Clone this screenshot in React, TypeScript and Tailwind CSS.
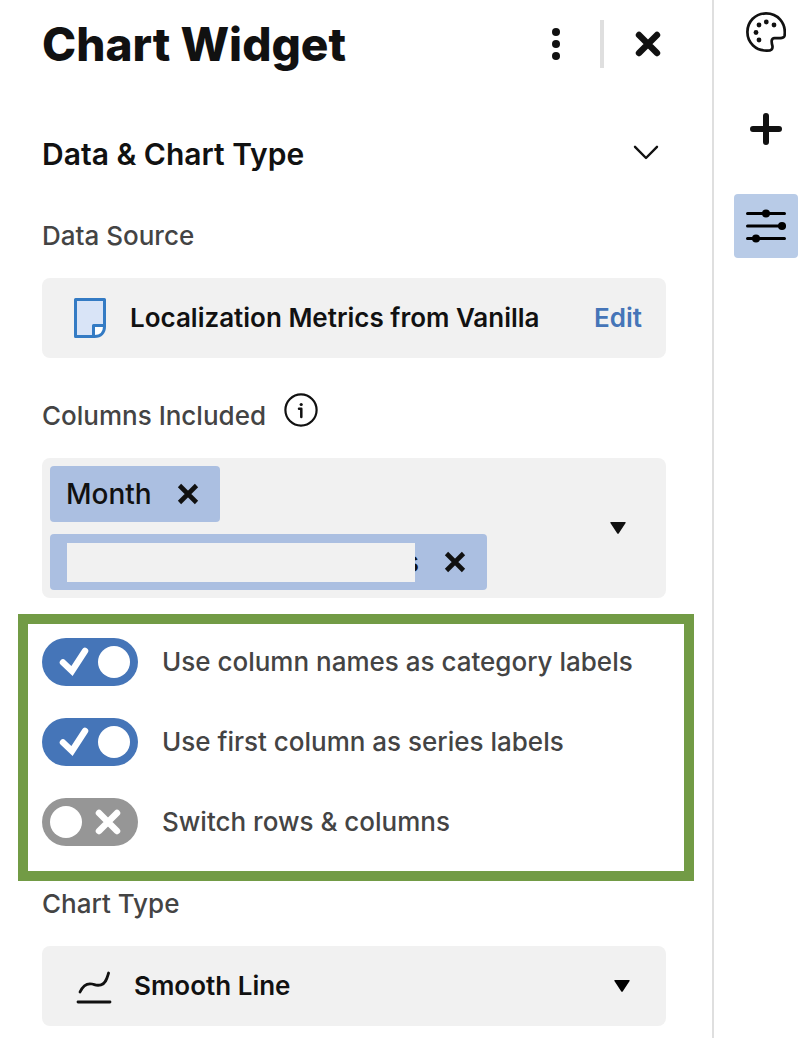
import { useState } from "react";
import type { ReactNode } from "react";

function CrossIcon({ className }: { className: string }) {
  return (
    <svg viewBox="0 0 24 24" className={className} fill="none" stroke="currentColor" strokeWidth="4.6" aria-hidden="true">
      <path d="M3.500 3.500 20.500 20.500M20.500 3.500 3.500 20.500" />
    </svg>
  );
}

function CloseIcon() {
  return (
    <svg viewBox="0 0 26 26" className="size-[26px]" fill="none" stroke="currentColor" strokeWidth="6.4" strokeLinecap="round" aria-hidden="true">
      <path d="M4 4 22 22M22 4 4 22" />
    </svg>
  );
}

function MoreIcon() {
  return (
    <svg viewBox="0 0 8 32" className="h-8 w-2" fill="currentColor" aria-hidden="true">
      <circle cx="4" cy="4" r="4" />
      <circle cx="4" cy="16" r="4" />
      <circle cx="4" cy="28" r="4" />
    </svg>
  );
}

function ChevronIcon() {
  return (
    <svg viewBox="0 0 26 18" className="h-[18px] w-[26px]" fill="none" stroke="currentColor" strokeWidth="2.400" strokeLinecap="round" strokeLinejoin="round" aria-hidden="true">
      <path d="M2 1.800 13 13 24 1.800" />
    </svg>
  );
}

function SheetIcon() {
  return (
    <svg viewBox="0 0 32 40" className="h-10 w-8 shrink-0" aria-hidden="true">
      <path d="M1.500 1.500h29V29c0 6-4 9.500-9.500 9.500H1.500z" fill="#d9e4f7" />
      <path d="M19.500 27.500h11V29c0 6-4 9.500-9.500 9.500h-1.500z" fill="#fff" />
      <path d="M1.500 1.500h29V28.500C30.500 34.500 27 38.500 20.500 38.500H1.500zM19.500 38.500V27.500H30.500" fill="none" stroke="#347bc4" strokeWidth="3" strokeLinejoin="round" />
    </svg>
  );
}

function InfoIcon() {
  return (
    <svg viewBox="0 0 34 34" className="size-[34px]" fill="none" stroke="currentColor" strokeWidth="2.200" aria-hidden="true">
      <circle cx="17" cy="17" r="15.600" />
      <path d="M15 15.800h2.300V24" strokeWidth="2.500" strokeLinecap="round" strokeLinejoin="round" />
      <circle cx="17.200" cy="11.500" r="1.600" fill="currentColor" stroke="none" />
    </svg>
  );
}

function CaretIcon({ className }: { className: string }) {
  return (
    <svg viewBox="0 0 16 12" className={className} fill="currentColor" aria-hidden="true">
      <path d="M1 0h14a.7.7 0 0 1 .6 1L8.700 11.400a.8.8 0 0 1-1.400 0L.4 1A.7.7 0 0 1 1 0z" />
    </svg>
  );
}

function SmoothLineIcon() {
  return (
    <svg viewBox="0 0 36 36" className="h-9 w-9" fill="none" stroke="currentColor" strokeWidth="2.800" strokeLinecap="round" aria-hidden="true">
      <path d="M4 24C7 17.500 11 15 16 16C20 17 21 18 25 16.800C30 15.500 31 10 32.600 5" />
      <path d="M2 34H34" />
    </svg>
  );
}

function PaletteIcon() {
  return (
    <svg viewBox="0 0 40 40" className="size-10" aria-hidden="true">
      <path
        d="M38.600 23.500C40.200 10.500 31.500 1.400 20 1.400C9.300 1.400 1.400 9.600 1.400 20C1.400 30.800 10 38.800 21 38.600C25.500 38.600 27 37 26.400 33.800C25.200 29.500 25.200 26.200 28.500 26.100C33 26.100 38 27 38.600 23.500Z"
        fill="none"
        stroke="currentColor"
        strokeWidth="2.700"
      />
      <g fill="currentColor">
        <circle cx="13" cy="13" r="2.400" />
        <circle cx="20.300" cy="10" r="2.400" />
        <circle cx="28" cy="13" r="2.400" />
        <circle cx="10" cy="20.500" r="2.400" />
        <circle cx="13" cy="28" r="2.400" />
      </g>
    </svg>
  );
}

function PlusIcon() {
  return (
    <svg viewBox="0 0 32 32" className="size-8" fill="none" stroke="currentColor" strokeWidth="6" strokeLinecap="round" aria-hidden="true">
      <path d="M16 3V29M3 16H29" />
    </svg>
  );
}

function SlidersIcon() {
  return (
    <svg viewBox="0 0 40 34" className="h-[34px] w-10" fill="#000" stroke="#000" strokeWidth="3" strokeLinecap="round" aria-hidden="true">
      <path d="M1.500 4.500h37M1.500 17h37M1.500 29.500h37" />
      <g stroke="none">
        <circle cx="20" cy="4.500" r="4" />
        <circle cx="36" cy="17" r="4" />
        <circle cx="10" cy="29.500" r="4" />
      </g>
    </svg>
  );
}

function Toggle({ label, initial }: { label: string; initial: boolean }) {
  const [on, setOn] = useState(initial);
  return (
    <label className="flex items-center gap-6 text-[26px] leading-8 font-medium text-[#444]">
      <span className="grid shrink-0">
        <input
          type="checkbox"
          role="switch"
          checked={on}
          onChange={(e) => setOn(e.target.checked)}
          className="col-start-1 row-start-1 h-12 w-24 appearance-none rounded-full bg-[#969696] checked:bg-[#4575b8]"
        />
        <svg viewBox="0 0 96 48" className="pointer-events-none col-start-1 row-start-1 h-12 w-24" fill="none" stroke="#fff" strokeWidth="6.500" strokeLinecap="round" aria-hidden="true">
          <circle cx={on ? 72 : 24} cy="24" r="16" fill="#fff" stroke="none" />
          {on ? (
            <path d="M21 24.500 30 33 43 13" strokeLinejoin="miter" />
          ) : (
            <path d="M57 15 75 33M75 15 57 33" />
          )}
        </svg>
      </span>
      {label}
    </label>
  );
}

function RailButton({ label, active, children }: { label: string; active?: boolean; children: ReactNode }) {
  return (
    <button
      type="button"
      aria-label={label}
      className={active ? "grid size-16 place-items-center rounded bg-[#b8cbe7]" : "grid size-16 place-items-center rounded"}
    >
      {children}
    </button>
  );
}

export default function App() {
  return (
    <div className="flex min-h-screen bg-white font-['Inter',sans-serif] text-[#111]">
      <main className="min-w-0 flex-1 border-r-2 border-[#dfdfdf] pr-[46px] pb-3 pl-[42px]">
        <header className="flex h-[88px] items-center">
          <h1 className="flex-1 text-[46px] leading-[56px] font-extrabold whitespace-nowrap">Chart Widget</h1>
          <button type="button" aria-label="More options" className="grid h-12 w-10 place-items-center">
            <MoreIcon />
          </button>
          <div className="mr-[31px] ml-6 h-12 w-1 bg-[#dfdfdf]" />
          <button type="button" aria-label="Close" className="mr-[5px]">
            <CloseIcon />
          </button>
        </header>

        <h2 className="mt-12 text-[30px] leading-9 font-semibold">
          <button type="button" aria-expanded="true" className="flex w-full items-center justify-between pr-[7px] text-left">
            Data &amp; Chart Type
            <ChevronIcon />
          </button>
        </h2>

        <h3 className="mt-12 text-[26px] leading-8 font-medium text-[#444]">Data Source</h3>
        <div className="mt-[26px] flex h-20 items-center rounded-lg bg-[#f1f1f1] pr-6 pl-8">
          <SheetIcon />
          <span className="ml-6 flex-1 text-[26px] leading-8 font-semibold whitespace-nowrap">Localization Metrics from Vanilla</span>
          <a href="#edit" className="text-[26px] leading-8 font-semibold text-[#4575b8]">Edit</a>
        </div>

        <div className="mt-[34px] flex h-10 items-start gap-[18px]">
          <h3 className="pt-2 text-[26px] leading-8 font-medium text-[#444]">Columns Included</h3>
          <button type="button" aria-label="About included columns" className="pt-px">
            <InfoIcon />
          </button>
        </div>
        <div className="mt-[26px] flex items-center justify-between rounded-lg bg-[#f1f1f1] py-2 pr-10 pl-2">
          <div className="flex flex-col items-start gap-3 text-[28px] leading-8 font-medium">
            <div className="flex h-14 items-center gap-6 rounded bg-[#abbfe1] px-4">
              Month
              <button type="button" aria-label="Remove Month" className="pr-1">
                <CrossIcon className="size-6" />
              </button>
            </div>
            <div className="relative flex h-14 items-center gap-6 rounded bg-[#abbfe1] px-4">
              <span className="w-[353px] text-right">s</span>
              <button type="button" aria-label="Remove column" className="pr-1">
                <CrossIcon className="size-6" />
              </button>
              <div className="absolute top-[9px] left-[17px] h-[39px] w-[348px] bg-[#f1f1f1]" />
            </div>
          </div>
          <button type="button" aria-label="Choose columns">
            <CaretIcon className="h-3 w-4" />
          </button>
        </div>

        <section className="mt-4 -mr-7 -ml-6 flex flex-col gap-8 border-10 border-[#729b45] px-[14px] pt-[14px] pb-[25px]">
          <Toggle label="Use column names as category labels" initial />
          <Toggle label="Use first column as series labels" initial />
          <Toggle label="Switch rows & columns" initial={false} />
        </section>

        <label htmlFor="chart-type" className="mt-[7px] block text-[26px] leading-8 font-medium text-[#444]">
          Chart Type
        </label>
        <div className="mt-[26px] grid items-center">
          <select
            id="chart-type"
            className="col-start-1 row-start-1 h-20 w-full appearance-none rounded-lg bg-[#f1f1f1] pl-[92px] text-[26px] leading-8 font-semibold"
          >
            <option>Smooth Line</option>
          </select>
          <div className="pointer-events-none col-start-1 row-start-1 flex items-center justify-between pr-9 pl-[34px]">
            <SmoothLineIcon />
            <CaretIcon className="h-3 w-4 text-black" />
          </div>
        </div>
      </main>

      <nav aria-label="Widget tools" className="flex w-[98px] shrink-0 flex-col items-center gap-[33px] pl-[6px]">
        <RailButton label="Themes">
          <PaletteIcon />
        </RailButton>
        <RailButton label="Add widget">
          <PlusIcon />
        </RailButton>
        <RailButton label="Widget settings" active>
          <SlidersIcon />
        </RailButton>
      </nav>
    </div>
  );
}
